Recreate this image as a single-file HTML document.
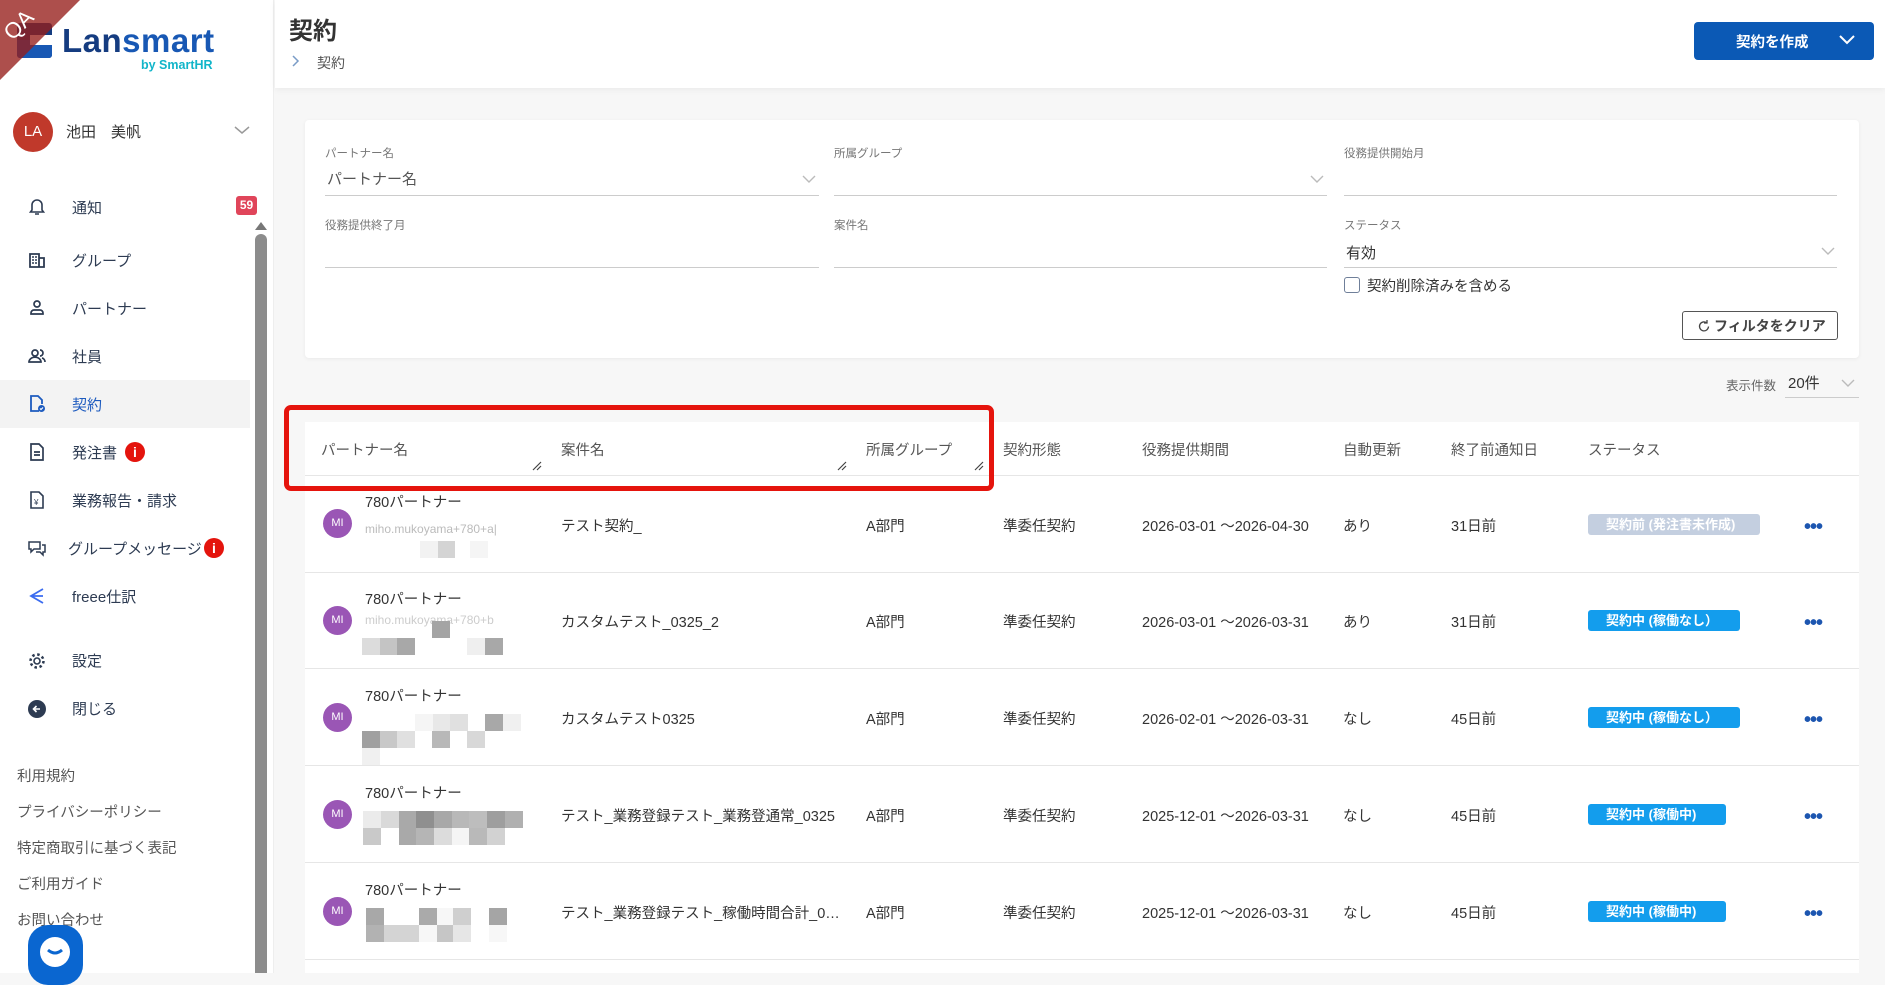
<!DOCTYPE html>
<html><head><meta charset="utf-8">
<style>
*{box-sizing:border-box;margin:0;padding:0}
body{width:1885px;height:973px;overflow:hidden;background:#f7f7f7;font-family:"Liberation Sans","Noto Sans CJK JP",sans-serif;color:#333;position:relative}
.a{position:absolute;white-space:nowrap}
#side{position:absolute;left:0;top:0;width:274px;height:973px;background:#fff;border-right:1px solid #eee}
.nav{position:absolute;left:72px;font-size:15px;color:#2d3b52}
.ic{position:absolute;left:26px;width:22px;height:22px}
.foot{position:absolute;left:17px;font-size:14.5px;color:#555}
.lbl{font-size:11.5px;color:#777}
.val{font-size:15px;color:#333}
.ul{position:absolute;height:1px;background:#ccc}
.th{font-size:14.5px;color:#555}
.td{font-size:14.5px;color:#333}
.av{position:absolute;left:323px;width:29px;height:29px;border-radius:50%;background:#9a56b5;color:#fff;font-size:11px;text-align:center;line-height:29px}
.bd{position:absolute;left:1588px;height:21px;border-radius:3px;color:#fff;font-size:13px;font-weight:bold;line-height:21px;padding-left:18px}
.dots{position:absolute;left:1804px;font-size:20px;color:#1d56b0;font-weight:bold;letter-spacing:-1px}
.px{position:absolute;width:18px;height:17px}
</style></head><body>

<div id="side">
  <div class="a" style="left:17px;top:23px;width:35px;height:35px;background:#153c80;border-radius:3px"></div>
  <div class="a" style="left:17px;top:40px;width:35px;height:18px;background:#1858b4;border-radius:0 0 3px 3px"></div>
  <div class="a" style="left:30px;top:35px;width:22px;height:10px;background:#fff"></div>
  <div class="a" style="left:62px;top:22px;font-size:33px;font-weight:bold;color:#153c80;letter-spacing:.5px">Lan<span style="color:#1858b4">smart</span></div>
  <div class="a" style="left:141px;top:58px;font-size:12.5px;font-weight:bold;color:#11b5c9">by SmartHR</div>
  <div class="a" style="left:0;top:0;width:0;height:0;border-top:80px solid rgba(150,30,25,.78);border-right:80px solid transparent;z-index:3"></div>
  <div class="a" style="left:3px;top:12px;color:#fff;font-size:22px;transform:rotate(-45deg);z-index:4">QA</div>
  <div class="a" style="left:13px;top:112px;width:40px;height:40px;border-radius:50%;background:#c0392b;color:#fff;font-size:15px;text-align:center;line-height:40px">LA</div>
  <div class="a" style="left:66px;top:121px;font-size:15px;color:#333">池田　美帆</div>
  <svg class="a" style="left:234px;top:125px" width="16" height="10"><path d="M1 2l7 6 7-6" stroke="#999" stroke-width="1.5" fill="none"/></svg>

  <svg class="ic" style="top:195px" viewBox="0 0 22 22"><path d="M6 15V10a5 5 0 0 1 10 0v5l1.5 2h-13zM9 19h4" stroke="#2d3b52" stroke-width="1.6" fill="none"/></svg>
  <div class="nav" style="top:197px">通知</div>
  <div class="a" style="left:236px;top:196px;width:21px;height:19px;background:#e0455a;border-radius:3px;color:#fff;font-size:12px;font-weight:bold;text-align:center;line-height:19px">59</div>

  <svg class="ic" style="top:249px" viewBox="0 0 22 22"><path d="M4 5h9v13H4zM13 9h5v9h-5" stroke="#2d3b52" stroke-width="1.8" fill="none"/><path d="M6 8h2M9 8h2M6 11h2M9 11h2M6 14h2M9 14h2" stroke="#2d3b52" stroke-width="1.5"/></svg>
  <div class="nav" style="top:250px">グループ</div>
  <svg class="ic" style="top:297px" viewBox="0 0 22 22"><circle cx="11" cy="7" r="3" stroke="#2d3b52" stroke-width="1.7" fill="none"/><path d="M5 17v-1a3 3 0 0 1 3-3h6a3 3 0 0 1 3 3v1z" stroke="#2d3b52" stroke-width="1.7" fill="none"/></svg>
  <div class="nav" style="top:298px">パートナー</div>
  <svg class="ic" style="top:345px" viewBox="0 0 22 22"><circle cx="9" cy="8" r="3" stroke="#2d3b52" stroke-width="1.7" fill="none"/><path d="M3 17a5 4 0 0 1 12 0zM14 5a3 3 0 0 1 0 6M16 13a4 4 0 0 1 3 4" stroke="#2d3b52" stroke-width="1.7" fill="none"/></svg>
  <div class="nav" style="top:346px">社員</div>
  <div class="a" style="left:0;top:380px;width:250px;height:48px;background:#f3f3f3"></div>
  <svg class="ic" style="top:393px" viewBox="0 0 22 22"><path d="M13 18H5V3h7l4 4v4" stroke="#1d5bbf" stroke-width="1.8" fill="none"/><circle cx="15.5" cy="15.5" r="3.5" fill="#1d5bbf"/><path d="M14 15.5l1 1 2-2" stroke="#fff" stroke-width="1.2" fill="none"/></svg>
  <div class="nav" style="top:394px;color:#1d5bbf">契約</div>
  <svg class="ic" style="top:441px" viewBox="0 0 22 22"><path d="M5 3h8l4 4v12H5z M8 11h6M8 14h6" stroke="#2d3b52" stroke-width="1.7" fill="none"/></svg>
  <div class="nav" style="top:442px">発注書</div>
  <div class="a" style="left:125px;top:442px;width:20px;height:20px;border-radius:50%;background:#e4140d;color:#fff;font-size:14px;font-weight:bold;text-align:center;line-height:20px">i</div>
  <svg class="ic" style="top:489px" viewBox="0 0 22 22"><path d="M5 3h8l4 4v12H5z" stroke="#2d3b52" stroke-width="1.6" fill="none"/><text x="8" y="16" font-size="8" fill="#2d3b52">¥</text></svg>
  <div class="nav" style="top:490px">業務報告・請求</div>
  <svg class="ic" style="top:537px" viewBox="0 0 22 22"><path d="M3 5h11v7H8l-3 3v-3H3zM16 8h3v7h-2v3l-3-3h-4" stroke="#2d3b52" stroke-width="1.5" fill="none"/></svg>
  <div class="nav" style="top:538px;left:68px">グループメッセージ</div>
  <div class="a" style="left:204px;top:538px;width:20px;height:20px;border-radius:50%;background:#e4140d;color:#fff;font-size:14px;font-weight:bold;text-align:center;line-height:20px">i</div>
  <svg class="ic" style="top:585px" viewBox="0 0 22 22"><path d="M17 4L5 11l12 7M6 11h11" stroke="#3b6cf0" stroke-width="1.8" fill="none"/></svg>
  <div class="nav" style="top:586px">freee仕訳</div>
  <svg class="ic" style="top:650px" viewBox="0 0 22 22"><circle cx="11" cy="11" r="3" stroke="#2d3b52" stroke-width="1.6" fill="none"/><circle cx="11" cy="11" r="6.5" stroke="#2d3b52" stroke-width="2.5" stroke-dasharray="2.5 2.6" fill="none"/></svg>
  <div class="nav" style="top:650px">設定</div>
  <svg class="ic" style="top:698px" viewBox="0 0 22 22"><circle cx="11" cy="11" r="9" fill="#2d3b52"/><path d="M14 11H8M10.5 8L7.5 11l3 3" stroke="#fff" stroke-width="1.6" fill="none"/></svg>
  <div class="nav" style="top:698px">閉じる</div>
  <div class="foot" style="top:765px">利用規約</div>
  <div class="foot" style="top:801px">プライバシーポリシー</div>
  <div class="foot" style="top:837px">特定商取引に基づく表記</div>
  <div class="foot" style="top:873px">ご利用ガイド</div>
  <div class="foot" style="top:909px">お問い合わせ</div>
  <div class="a" style="left:28px;top:925px;width:55px;height:60px;border-radius:20px;background:#0a66d0"></div>
  <div class="a" style="left:40px;top:937px;width:30px;height:30px;border-radius:50%;background:#fff"></div>
  <svg class="a" style="left:44px;top:946px" width="22" height="12"><path d="M4 4q7 6 14 0" stroke="#0a66d0" stroke-width="3" fill="none"/></svg>
  <div class="a" style="left:255px;top:234px;width:12px;height:739px;background:#8c8c8c;border-radius:6px 6px 0 0"></div>
  <div class="a" style="left:255px;top:235px;width:0;height:0;border-left:6px solid transparent;border-right:6px solid transparent;border-bottom:8px solid #777;transform:translateY(-13px)"></div>
</div>

<!-- header -->
<div class="a" style="left:275px;top:0;width:1610px;height:88px;background:#fff;box-shadow:0 2px 6px rgba(0,0,0,.05)"></div>
<div class="a" style="left:289px;top:11px;font-size:24px;font-weight:bold;color:#333">契約</div>
<svg class="a" style="left:292px;top:55px" width="8" height="12"><path d="M1 1l5 5-5 5" stroke="#7a9cc7" stroke-width="1.5" fill="none"/></svg>
<div class="a" style="left:317px;top:53px;font-size:14px;color:#555">契約</div>
<div class="a" style="left:1694px;top:22px;width:180px;height:38px;background:#0b59b5;border-radius:4px"></div>
<div class="a" style="left:1736px;top:31px;font-size:14.5px;font-weight:bold;color:#fff">契約を作成</div>
<svg class="a" style="left:1839px;top:35px" width="16" height="10"><path d="M1 1l7 7 7-7" stroke="#fff" stroke-width="2" fill="none"/></svg>

<!-- filter card -->
<div class="a" style="left:305px;top:120px;width:1554px;height:238px;background:#fff;border-radius:4px;box-shadow:0 1px 4px rgba(0,0,0,.06)"></div>
<div class="a lbl" style="left:325px;top:145px">パートナー名</div>
<div class="a val" style="left:327px;top:168px;color:#555">パートナー名</div>
<svg class="a" style="left:802px;top:175px" width="14" height="8"><path d="M1 1l6 6 6-6" stroke="#bbb" stroke-width="1.4" fill="none"/></svg>
<div class="ul" style="left:325px;top:195px;width:494px"></div>
<div class="a lbl" style="left:834px;top:145px">所属グループ</div>
<svg class="a" style="left:1310px;top:175px" width="14" height="8"><path d="M1 1l6 6 6-6" stroke="#bbb" stroke-width="1.4" fill="none"/></svg>
<div class="ul" style="left:834px;top:195px;width:493px"></div>
<div class="a lbl" style="left:1344px;top:145px">役務提供開始月</div>
<div class="ul" style="left:1344px;top:195px;width:493px"></div>
<div class="a lbl" style="left:325px;top:217px">役務提供終了月</div>
<div class="ul" style="left:325px;top:267px;width:494px"></div>
<div class="a lbl" style="left:834px;top:217px">案件名</div>
<div class="ul" style="left:834px;top:267px;width:493px"></div>
<div class="a lbl" style="left:1344px;top:217px">ステータス</div>
<div class="a val" style="left:1346px;top:242px">有効</div>
<svg class="a" style="left:1821px;top:247px" width="14" height="8"><path d="M1 1l6 6 6-6" stroke="#bbb" stroke-width="1.4" fill="none"/></svg>
<div class="ul" style="left:1344px;top:267px;width:493px"></div>
<div class="a" style="left:1344px;top:277px;width:16px;height:16px;border:1.6px solid #6f7f99;border-radius:3px"></div>
<div class="a" style="left:1367px;top:275px;font-size:14.5px;color:#333">契約削除済みを含める</div>
<div class="a" style="left:1682px;top:311px;width:156px;height:29px;border:1px solid #555;border-radius:3px"></div>
<svg class="a" style="left:1698px;top:319px" width="12" height="13"><path d="M9 4a4.5 4.5 0 1 0 1.5 3.5M9 1v3h-3" stroke="#444" stroke-width="1.3" fill="none"/></svg>
<div class="a" style="left:1714px;top:316px;font-size:14px;font-weight:bold;color:#444">フィルタをクリア</div>

<div class="a" style="left:1726px;top:375px;font-size:12.5px;color:#666">表示件数</div>
<div class="a" style="left:1788px;top:372px;font-size:15px;color:#333">20件</div>
<svg class="a" style="left:1841px;top:379px" width="14" height="8"><path d="M1 1l6 6 6-6" stroke="#bbb" stroke-width="1.4" fill="none"/></svg>
<div class="ul" style="left:1785px;top:397px;width:74px"></div>

<!-- table -->
<div class="a" style="left:305px;top:422px;width:1554px;height:551px;background:#fff"></div>
<div class="ul" style="left:305px;top:475px;width:1554px;background:#e6e6e6"></div>
<div class="a th" style="left:321px;top:439px">パートナー名</div>
<div class="a th" style="left:561px;top:439px">案件名</div>
<div class="a th" style="left:866px;top:439px">所属グループ</div>
<div class="a th" style="left:1003px;top:439px">契約形態</div>
<div class="a th" style="left:1142px;top:439px">役務提供期間</div>
<div class="a th" style="left:1343px;top:439px">自動更新</div>
<div class="a th" style="left:1451px;top:439px">終了前通知日</div>
<div class="a th" style="left:1588px;top:439px">ステータス</div>
<svg class="a" style="left:532px;top:461px" width="10" height="10"><path d="M1 9l8-8M5 9l4-4" stroke="#444" stroke-width="1.2"/></svg>
<svg class="a" style="left:837px;top:461px" width="10" height="10"><path d="M1 9l8-8M5 9l4-4" stroke="#444" stroke-width="1.2"/></svg>
<svg class="a" style="left:974px;top:461px" width="10" height="10"><path d="M1 9l8-8M5 9l4-4" stroke="#444" stroke-width="1.2"/></svg>
<div class="a" style="left:284px;top:405px;width:710px;height:86px;border:5px solid #e5140d;border-radius:7px"></div>

<!-- rows -->
<div class="ul" style="left:305px;top:572px;width:1554px;background:#e6e6e6"></div>
<div class="ul" style="left:305px;top:668px;width:1554px;background:#e6e6e6"></div>
<div class="ul" style="left:305px;top:765px;width:1554px;background:#e6e6e6"></div>
<div class="ul" style="left:305px;top:862px;width:1554px;background:#e6e6e6"></div>
<div class="ul" style="left:305px;top:959px;width:1554px;background:#e6e6e6"></div>

<!-- row1 -->
<div class="av" style="top:509px">MI</div>
<div class="a td" style="left:365px;top:491px">780パートナー</div>
<div class="a" style="left:365px;top:522px;font-size:12px;color:#bbb">miho.mukoyama+780+a|</div>
<div class="px" style="left:437px;top:541px;background:#d4d4d4"></div><div class="px" style="left:420px;top:541px;background:#f2f2f2"></div><div class="px" style="left:470px;top:541px;background:#f5f5f5"></div>
<div class="a td" style="left:561px;top:515px">テスト契約_</div>
<div class="a td" style="left:866px;top:515px">A部門</div>
<div class="a td" style="left:1003px;top:515px">準委任契約</div>
<div class="a td" style="left:1142px;top:515px">2026-03-01 ～2026-04-30</div>
<div class="a td" style="left:1343px;top:515px">あり</div>
<div class="a td" style="left:1451px;top:515px">31日前</div>
<div class="bd" style="top:514px;width:172px;background:#c4cfe0">契約前 (発注書未作成)</div>
<div class="dots" style="top:516px">•••</div>

<!-- row2 -->
<div class="av" style="top:606px">MI</div>
<div class="a td" style="left:365px;top:588px">780パートナー</div>
<div class="a" style="left:365px;top:613px;font-size:12px;color:#ccc">miho.mukoyama+780+b</div>
<div class="px" style="left:432px;top:621px;background:#a4a4a4"></div>
<div class="px" style="left:362px;top:638px;background:#dcdcdc"></div><div class="px" style="left:380px;top:638px;background:#c4c4c4"></div><div class="px" style="left:397px;top:638px;background:#a8a8a8"></div><div class="px" style="left:467px;top:638px;background:#efefef"></div><div class="px" style="left:485px;top:638px;background:#a8a8a8"></div>
<div class="a td" style="left:561px;top:611px">カスタムテスト_0325_2</div>
<div class="a td" style="left:866px;top:611px">A部門</div>
<div class="a td" style="left:1003px;top:611px">準委任契約</div>
<div class="a td" style="left:1142px;top:611px">2026-03-01 ～2026-03-31</div>
<div class="a td" style="left:1343px;top:611px">あり</div>
<div class="a td" style="left:1451px;top:611px">31日前</div>
<div class="bd" style="top:610px;width:152px;background:#139ded">契約中 (稼働なし）</div>
<div class="dots" style="top:612px">•••</div>

<!-- row3 -->
<div class="av" style="top:703px">MI</div>
<div class="a td" style="left:365px;top:685px">780パートナー</div>
<div class="px" style="left:432px;top:714px;background:#e8e8e8"></div><div class="px" style="left:450px;top:714px;background:#e0e0e0"></div><div class="px" style="left:485px;top:714px;background:#a8a8a8"></div><div class="px" style="left:503px;top:714px;background:#f0f0f0"></div><div class="px" style="left:415px;top:714px;background:#f5f5f5"></div>
<div class="px" style="left:362px;top:731px;background:#a0a0a0"></div><div class="px" style="left:380px;top:731px;background:#c8c8c8"></div><div class="px" style="left:397px;top:731px;background:#e0e0e0"></div><div class="px" style="left:432px;top:731px;background:#b8b8b8"></div><div class="px" style="left:467px;top:731px;background:#d8d8d8"></div><div class="px" style="left:362px;top:748px;background:#f0f0f0"></div>
<div class="a td" style="left:561px;top:708px">カスタムテスト0325</div>
<div class="a td" style="left:866px;top:708px">A部門</div>
<div class="a td" style="left:1003px;top:708px">準委任契約</div>
<div class="a td" style="left:1142px;top:708px">2026-02-01 ～2026-03-31</div>
<div class="a td" style="left:1343px;top:708px">なし</div>
<div class="a td" style="left:1451px;top:708px">45日前</div>
<div class="bd" style="top:707px;width:152px;background:#139ded">契約中 (稼働なし）</div>
<div class="dots" style="top:709px">•••</div>

<!-- row4 -->
<div class="av" style="top:800px">MI</div>
<div class="a td" style="left:365px;top:782px">780パートナー</div>
<div class="px" style="left:363px;top:811px;background:#ebebeb"></div><div class="px" style="left:381px;top:811px;background:#d9d9d9"></div><div class="px" style="left:399px;top:811px;background:#a9a9a9"></div><div class="px" style="left:416px;top:811px;background:#8f8f8f"></div><div class="px" style="left:434px;top:811px;background:#a8a8a8"></div><div class="px" style="left:452px;top:811px;background:#b8b8b8"></div><div class="px" style="left:469px;top:811px;background:#bdbdbd"></div><div class="px" style="left:487px;top:811px;background:#9e9e9e"></div><div class="px" style="left:505px;top:811px;background:#b0b0b0"></div>
<div class="px" style="left:363px;top:828px;background:#c9c9c9"></div><div class="px" style="left:399px;top:828px;background:#a9a9a9"></div><div class="px" style="left:416px;top:828px;background:#b5b5b5"></div><div class="px" style="left:434px;top:828px;background:#dcdcdc"></div><div class="px" style="left:452px;top:828px;background:#f5f5f5"></div><div class="px" style="left:469px;top:828px;background:#b9b9b9"></div><div class="px" style="left:487px;top:828px;background:#d2d2d2"></div>
<div class="a td" style="left:561px;top:805px">テスト_業務登録テスト_業務登通常_0325</div>
<div class="a td" style="left:866px;top:805px">A部門</div>
<div class="a td" style="left:1003px;top:805px">準委任契約</div>
<div class="a td" style="left:1142px;top:805px">2025-12-01 ～2026-03-31</div>
<div class="a td" style="left:1343px;top:805px">なし</div>
<div class="a td" style="left:1451px;top:805px">45日前</div>
<div class="bd" style="top:804px;width:138px;background:#139ded">契約中 (稼働中)</div>
<div class="dots" style="top:806px">•••</div>

<!-- row5 -->
<div class="av" style="top:897px">MI</div>
<div class="a td" style="left:365px;top:879px">780パートナー</div>
<div class="px" style="left:366px;top:908px;background:#a8a8a8"></div><div class="px" style="left:419px;top:908px;background:#aaaaaa"></div><div class="px" style="left:437px;top:908px;background:#f7f7f7"></div><div class="px" style="left:453px;top:908px;background:#cfcfcf"></div><div class="px" style="left:489px;top:908px;background:#a5a5a5"></div>
<div class="px" style="left:366px;top:925px;background:#b2b2b2"></div><div class="px" style="left:384px;top:925px;background:#d4d4d4"></div><div class="px" style="left:401px;top:925px;background:#d4d4d4"></div><div class="px" style="left:419px;top:925px;background:#f7f7f7"></div><div class="px" style="left:437px;top:925px;background:#c6c6c6"></div><div class="px" style="left:453px;top:925px;background:#e6e6e6"></div><div class="px" style="left:489px;top:925px;background:#f7f7f7"></div>
<div class="a td" style="left:561px;top:902px">テスト_業務登録テスト_稼働時間合計_0…</div>
<div class="a td" style="left:866px;top:902px">A部門</div>
<div class="a td" style="left:1003px;top:902px">準委任契約</div>
<div class="a td" style="left:1142px;top:902px">2025-12-01 ～2026-03-31</div>
<div class="a td" style="left:1343px;top:902px">なし</div>
<div class="a td" style="left:1451px;top:902px">45日前</div>
<div class="bd" style="top:901px;width:138px;background:#139ded">契約中 (稼働中)</div>
<div class="dots" style="top:903px">•••</div>
</body></html>
